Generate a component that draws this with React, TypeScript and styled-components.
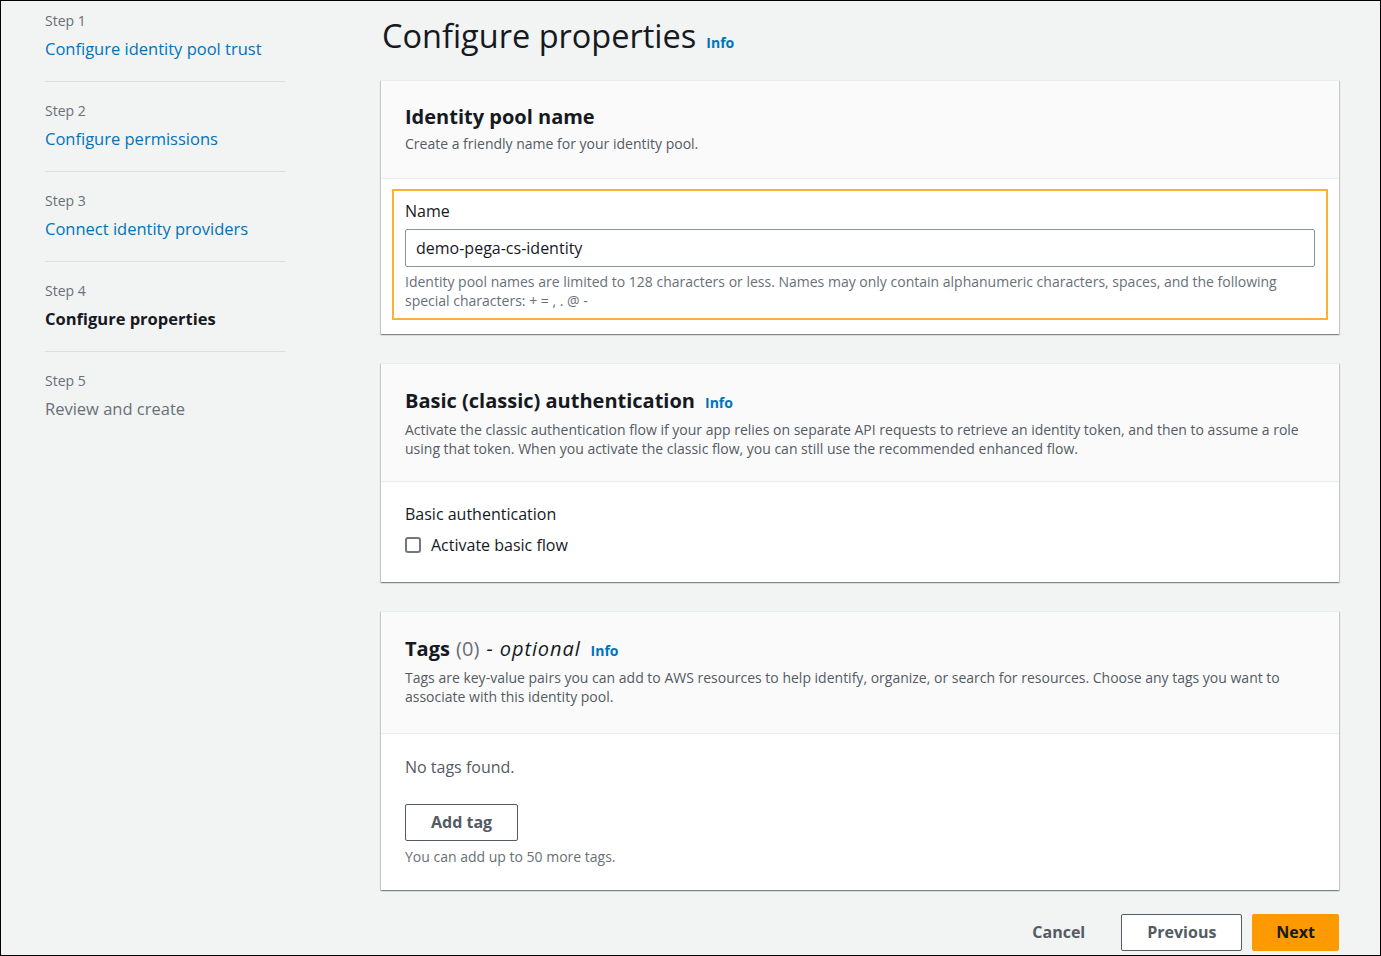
import React from 'react';
import styled, { createGlobalStyle } from 'styled-components';

const GlobalStyle = createGlobalStyle`
  html, body {
    margin: 0;
    padding: 0;
    background: #f2f3f3;
  }
  body {
    font-family: "Open Sans", "Liberation Sans", sans-serif;
    color: #16191f;
  }
  * { box-sizing: border-box; }
`;

const Frame = styled.div`
  width: 1381px;
  height: 956px;
  border: 1px solid #000;
  background: #f2f3f3;
  display: flex;
  overflow: hidden;
`;

const Nav = styled.nav`
  width: 380px;
  flex: none;
  padding: 0 0 0 44px;
`;

const NavStep = styled.div`
  width: 240px;
  padding: 19px 0 20px;
  border-bottom: 1px solid #dcdfe0;

  &:first-child { padding-top: 10px; }
  &:last-child { border-bottom: none; }
`;

const StepLabel = styled.div`
  font-size: 14px;
  line-height: 20px;
  color: #687078;
  margin-bottom: 6px;
`;

const StepName = styled.div<{ $state: 'link' | 'current' | 'disabled' }>`
  font-size: 16.5px;
  line-height: 24px;
  color: ${p => (p.$state === 'link' ? '#0073bb' : p.$state === 'current' ? '#16191f' : '#687078')};
  font-weight: ${p => (p.$state === 'current' ? 700 : 400)};
`;

const Main = styled.main`
  width: 958px;
  flex: none;
  display: flex;
  flex-direction: column;
`;

const Title = styled.h1`
  margin: 15px 0 24px 1px;
  height: 40px;
  font-size: 32.5px;
  line-height: 40px;
  font-weight: 400;
  color: #16191f;
`;

const Info = styled.a`
  font-size: 14px;
  font-weight: 700;
  color: #0073bb;
  text-decoration: none;
  font-style: normal;
  letter-spacing: 0;
  margin-left: 10px;
`;

const Card = styled.section`
  background: #fff;
  border-top: 1px solid #eaeded;
  box-shadow: 0 1px 1px 0 rgba(0, 28, 36, 0.3), 1px 1px 1px 0 rgba(0, 28, 36, 0.15),
    -1px 1px 1px 0 rgba(0, 28, 36, 0.15);
  margin-bottom: 29px;
`;

const CardHeader = styled.header<{ $top?: number; $bottom?: number }>`
  background: #fafafa;
  border-bottom: 1px solid #eaeded;
  padding: ${p => p.$top ?? 23}px 24px ${p => p.$bottom ?? 24}px;
`;

const CardTitle = styled.h2`
  margin: 0 0 4px;
  font-size: 20px;
  line-height: 26px;
  font-weight: 700;
`;

const Count = styled.span`
  font-weight: 400;
  color: #687078;
  margin-left: 1px;
`;

const Optional = styled.span`
  font-weight: 400;
  font-style: italic;
  letter-spacing: 0.9px;
  margin-left: 2px;
`;

const Description = styled.p`
  margin: 0;
  font-size: 14px;
  line-height: 19.5px;
  color: #545b64;
`;

const CardBody = styled.div<{ $pad: string }>`
  padding: ${p => p.$pad};
`;

const Highlight = styled.div`
  margin: 0 -13px;
  padding: 9px 11px 8px;
  border: 2px solid #f9b233;
`;

const FieldLabel = styled.div`
  font-size: 16px;
  line-height: 22px;
  color: #16191f;
  margin-bottom: 7px;
`;

const Input = styled.div`
  height: 38px;
  border: 1px solid #879596;
  border-radius: 2px;
  padding: 0 10px;
  display: flex;
  align-items: center;
  font-size: 16px;
  color: #16191f;
  background: #fff;
`;

const Help = styled.div<{ $top?: number }>`
  margin-top: ${p => p.$top ?? 5}px;
  font-size: 14px;
  line-height: 19px;
  color: #687078;
`;

const CheckRow = styled.label`
  display: flex;
  align-items: center;
  gap: 10px;
  margin-top: 8px;
  font-size: 16px;
  line-height: 24px;
`;

const Box = styled.span`
  width: 16px;
  height: 16px;
  border: 2px solid #6f7780;
  border-radius: 3px;
  background: #fff;
`;

const Empty = styled.div`
  font-size: 16px;
  line-height: 22px;
  color: #545b64;
  margin-bottom: 26px;
`;

const Button = styled.button<{ $variant: 'normal' | 'primary' | 'link' }>`
  height: 37px;
  padding: 0 ${p => (p.$variant === 'primary' ? 23 : 25)}px;
  font-family: inherit;
  font-size: 16px;
  font-weight: 700;
  border-radius: 2px;
  cursor: pointer;
  border: 1px solid
    ${p => (p.$variant === 'primary' ? '#ff9900' : p.$variant === 'normal' ? '#545b64' : 'transparent')};
  background: ${p => (p.$variant === 'primary' ? '#ff9900' : p.$variant === 'normal' ? '#fff' : 'transparent')};
  color: ${p => (p.$variant === 'primary' ? '#16191f' : '#545b64')};
`;

const Footer = styled.div`
  display: flex;
  justify-content: flex-end;
  gap: 10px;
  margin-top: -5px;
`;

const steps = [
  { label: 'Step 1', name: 'Configure identity pool trust', state: 'link' as const },
  { label: 'Step 2', name: 'Configure permissions', state: 'link' as const },
  { label: 'Step 3', name: 'Connect identity providers', state: 'link' as const },
  { label: 'Step 4', name: 'Configure properties', state: 'current' as const },
  { label: 'Step 5', name: 'Review and create', state: 'disabled' as const },
];

const App: React.FC = () => {
  return (
    <>
      <GlobalStyle />
      <Frame>
        <Nav>
          {steps.map(step => (
            <NavStep key={step.label}>
              <StepLabel>{step.label}</StepLabel>
              <StepName $state={step.state}>{step.name}</StepName>
            </NavStep>
          ))}
        </Nav>
        <Main>
          <Title>
            Configure properties<Info>Info</Info>
          </Title>

          <Card>
            <CardHeader>
              <CardTitle>Identity pool name</CardTitle>
              <Description>Create a friendly name for your identity pool.</Description>
            </CardHeader>
            <CardBody $pad="10px 24px 14px">
              <Highlight>
                <FieldLabel>Name</FieldLabel>
                <Input>demo-pega-cs-identity</Input>
                <Help>
                  Identity pool names are limited to 128 characters or less. Names may only contain alphanumeric
                  characters, spaces, and the following special characters: + = , . @ -
                </Help>
              </Highlight>
            </CardBody>
          </Card>

          <Card>
            <CardHeader $top={24} $bottom={22}>
              <CardTitle>
                Basic (classic) authentication<Info>Info</Info>
              </CardTitle>
              <Description>
                Activate the classic authentication flow if your app relies on separate API requests to retrieve an
                identity token, and then to assume a role using that token. When you activate the classic flow, you
                can still use the recommended enhanced flow.
              </Description>
            </CardHeader>
            <CardBody $pad="21px 24px 25px">
              <FieldLabel>Basic authentication</FieldLabel>
              <CheckRow>
                <Box />
                Activate basic flow
              </CheckRow>
            </CardBody>
          </Card>

          <Card>
            <CardHeader $top={24} $bottom={26}>
              <CardTitle>
                Tags <Count>(0)</Count> <Optional>- optional</Optional>
                <Info>Info</Info>
              </CardTitle>
              <Description>
                Tags are key-value pairs you can add to AWS resources to help identify, organize, or search for
                resources. Choose any tags you want to associate with this identity pool.
              </Description>
            </CardHeader>
            <CardBody $pad="22px 24px 24px">
              <Empty>No tags found.</Empty>
              <Button $variant="normal">Add tag</Button>
              <Help $top={6}>You can add up to 50 more tags.</Help>
            </CardBody>
          </Card>

          <Footer>
            <Button $variant="link">Cancel</Button>
            <Button $variant="normal">Previous</Button>
            <Button $variant="primary">Next</Button>
          </Footer>
        </Main>
      </Frame>
    </>
  );
};

export default App;
